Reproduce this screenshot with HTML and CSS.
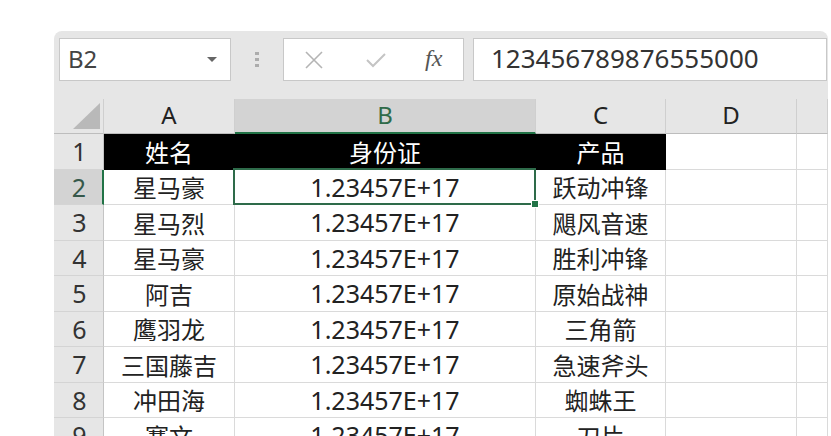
FILE: index.html
```html
<!DOCTYPE html>
<html lang="zh-CN">
<head>
    <meta charset="UTF-8">
    <meta name="viewport" content="width=device-width, initial-scale=1.0">
    <title>身份证 - 工作表</title>
    <link rel="stylesheet" href="styles.css">
</head>
<body>
    <div class="window">
        <div class="formula-bar">
            <div class="name-box">
                <span>B2</span>
                <span class="caret"></span>
            </div>
            <div class="grip"><i></i><i></i><i></i></div>
            <div class="fx-buttons">
                <svg class="btn-cancel" width="20" height="20" viewBox="0 0 20 20">
                    <path d="M2 2 L18 18 M18 2 L2 18" stroke="#b4b4b4" stroke-width="1.6" fill="none"/>
                </svg>
                <svg class="btn-enter" width="22" height="18" viewBox="0 0 22 18">
                    <path d="M2 9 L8 15 L20 3" stroke="#c4c4c4" stroke-width="2" fill="none"/>
                </svg>
                <span class="fx">fx</span>
            </div>
            <div class="formula-input">123456789876555000</div>
        </div>

        <div class="sheet">
            <div class="corner"><span class="corner-mark"></span></div>
            <div class="col-head">A</div>
            <div class="col-head active">B</div>
            <div class="col-head">C</div>
            <div class="col-head">D</div>
            <div class="col-head"></div>

            <div class="row-head">1</div>
            <div class="cell title">姓名</div>
            <div class="cell title">身份证</div>
            <div class="cell title">产品</div>
            <div class="cell"></div>
            <div class="cell"></div>

            <div class="row-head active">2</div>
            <div class="cell">星马豪</div>
            <div class="cell num selected">1.23457E+17</div>
            <div class="cell">跃动冲锋</div>
            <div class="cell"></div>
            <div class="cell"></div>

            <div class="row-head">3</div>
            <div class="cell">星马烈</div>
            <div class="cell num">1.23457E+17</div>
            <div class="cell">飓风音速</div>
            <div class="cell"></div>
            <div class="cell"></div>

            <div class="row-head">4</div>
            <div class="cell">星马豪</div>
            <div class="cell num">1.23457E+17</div>
            <div class="cell">胜利冲锋</div>
            <div class="cell"></div>
            <div class="cell"></div>

            <div class="row-head">5</div>
            <div class="cell">阿吉</div>
            <div class="cell num">1.23457E+17</div>
            <div class="cell">原始战神</div>
            <div class="cell"></div>
            <div class="cell"></div>

            <div class="row-head">6</div>
            <div class="cell">鹰羽龙</div>
            <div class="cell num">1.23457E+17</div>
            <div class="cell">三角箭</div>
            <div class="cell"></div>
            <div class="cell"></div>

            <div class="row-head">7</div>
            <div class="cell">三国藤吉</div>
            <div class="cell num">1.23457E+17</div>
            <div class="cell">急速斧头</div>
            <div class="cell"></div>
            <div class="cell"></div>

            <div class="row-head">8</div>
            <div class="cell">冲田海</div>
            <div class="cell num">1.23457E+17</div>
            <div class="cell">蜘蛛王</div>
            <div class="cell"></div>
            <div class="cell"></div>

            <div class="row-head">9</div>
            <div class="cell">赛文</div>
            <div class="cell num">1.23457E+17</div>
            <div class="cell">刀片</div>
            <div class="cell"></div>
            <div class="cell"></div>
        </div>
    </div>
</body>
</html>
```

FILE: styles.css
```css
html, body {
    margin: 0;
    height: 100%;
    overflow: hidden;
    background: #fff;
}
body {
    font-family: "Noto Sans", "Noto Sans CJK SC", sans-serif;
    color: #222;
}
.window {
    margin: 31px 0 0 54px;
    width: 774px;
    background: #e6e6e6;
    border-radius: 8px 8px 0 0;
    overflow: hidden;
}

/* formula bar */
.formula-bar {
    display: flex;
    align-items: stretch;
    height: 43px;
    padding: 7px 0 0 5px;
    margin-bottom: 18px;
}
.name-box {
    width: 172px;
    box-sizing: border-box;
    background: #fff;
    border: 1px solid #c8c8c8;
    display: flex;
    align-items: center;
    justify-content: space-between;
    padding: 0 13px 3px 8px;
    font-size: 24px;
    color: #444;
}
.caret {
    width: 0;
    height: 0;
    margin-top: 3px;
    border-left: 5px solid transparent;
    border-right: 5px solid transparent;
    border-top: 5px solid #666;
}
.grip {
    width: 52px;
    display: flex;
    flex-direction: column;
    align-items: center;
    justify-content: center;
    gap: 3px;
}
.grip i {
    display: block;
    width: 4px;
    height: 3px;
    background: #acacac;
}
.fx-buttons {
    width: 181px;
    box-sizing: border-box;
    background: #fff;
    border: 1px solid #c8c8c8;
    margin-right: 9px;
    display: flex;
    align-items: center;
    padding: 0 0 0 20px;
}
.btn-cancel {
    margin-right: 41px;
}
.btn-enter {
    margin-right: 38px;
}
.fx {
    font-family: "Liberation Serif", serif;
    font-style: italic;
    font-size: 24px;
    color: #555;
    margin-top: -3px;
}
.formula-input {
    flex: 1;
    margin-right: 1px;
    background: #fff;
    border: 1px solid #c8c8c8;
    display: flex;
    align-items: center;
    padding: 0 0 3px 17px;
    font-size: 26px;
    color: #333;
}

/* grid: rows alternate 36/35 px */
.sheet {
    display: grid;
    grid-template-columns: 50px 131px 301px 130px 131px 1fr;
    grid-template-rows: 35px 36px 35px 36px 35px 36px 35px 36px 35px 36px;
    background: #fff;
}
.sheet > div {
    box-sizing: border-box;
    display: flex;
    align-items: center;
    justify-content: center;
    border-right: 1px solid #dadada;
    border-bottom: 1px solid #dadada;
    font-size: 24px;
    padding-bottom: 1px;
}
.sheet > .corner,
.sheet > .col-head {
    background: #e6e6e6;
    border-right-color: #cfcfcf;
    border-bottom-color: #bdbdbd;
    font-size: 24px;
    color: #222;
    padding-bottom: 3px;
}
.sheet > .corner {
    align-items: flex-end;
    justify-content: flex-end;
    padding: 0 3px 4px 0;
}
.corner-mark {
    width: 27px;
    height: 26px;
    background: #b9b9b9;
    clip-path: polygon(100% 0, 100% 100%, 0 100%);
}
.sheet > .col-head.active {
    background: #d3d3d3;
    color: #2f6b49;
    border-bottom: 2px solid #217346;
}
.sheet > .row-head {
    background: #e6e6e6;
    border-right-color: #c4c4c4;
    border-bottom-color: #d4d4d4;
    color: #333;
    font-size: 25px;
    padding-left: 2px;
}
.sheet > .row-head.active {
    background: #d3d3d3;
    color: #36584a;
    border-right: 2px solid #217346;
}
.sheet > .cell.title {
    background: #000;
    color: #fff;
    border-right-color: #000;
    border-bottom-color: #000;
}
.sheet > .cell.num {
    font-size: 25px;
}

/* active cell frame and fill handle */
.sheet > .cell.selected {
    position: relative;
}
.cell.selected::before {
    content: "";
    position: absolute;
    top: -2px;
    left: -2px;
    right: -1px;
    bottom: -1px;
    border: 2px solid #2e6b4a;
}
.cell.selected::after {
    content: "";
    position: absolute;
    right: -4px;
    bottom: -4px;
    width: 6px;
    height: 6px;
    background: #217346;
    border: 1px solid #fff;
}
```
